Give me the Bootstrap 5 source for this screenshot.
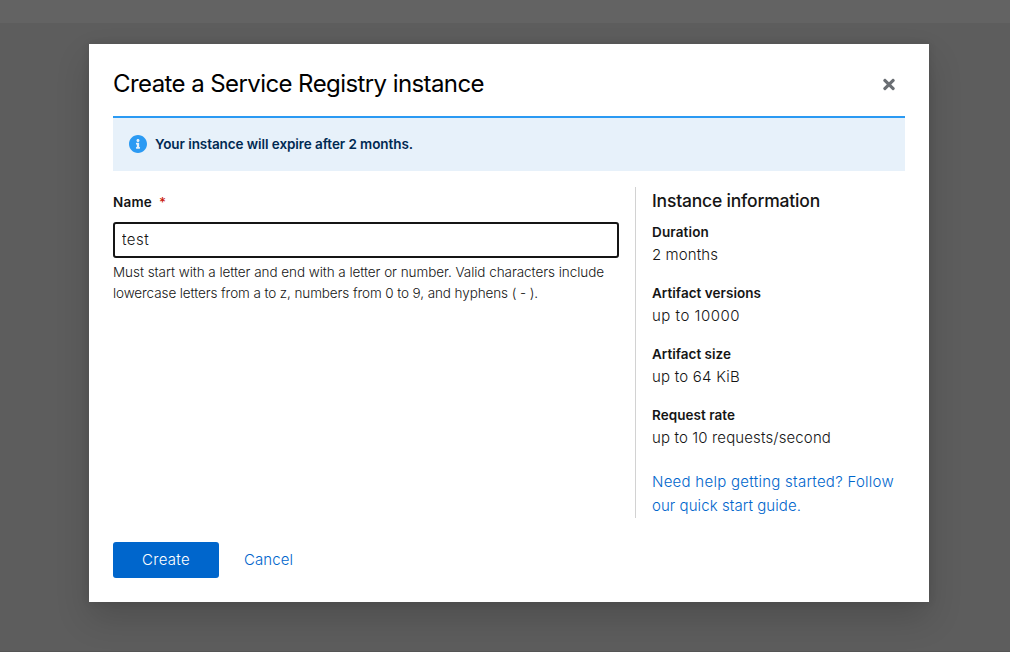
<!DOCTYPE html>
<html lang="en">
<head>
<meta charset="utf-8">
<meta name="viewport" content="width=device-width, initial-scale=1">
<title>Create a Service Registry instance</title>
<link href="https://cdn.jsdelivr.net/npm/bootstrap@5.3.0/dist/css/bootstrap.min.css" rel="stylesheet">
<style>
body { font-family: Inter, "Liberation Sans", sans-serif; font-size: 15px; font-weight: 350; line-height: 24px; color: #151515; background: #5d5d5d; height: 652px; overflow: hidden; border-bottom: 1px solid #555; }
.masthead { height: 23px; background: #636363; margin-bottom: 21px; }
.dialog-box { width: 840px; height: 558px; margin-left: 89px; padding: 24px; background: #fff; box-shadow: 0 16px 32px 0 rgba(3,3,3,.16), 0 0 8px 0 rgba(3,3,3,.1); }
.dialog-title { font-size: 24px; line-height: 31px; font-weight: 400; color: #000; }
.close-btn { width: 32px; height: 33px; color: #6a6e73; }
.info-alert { height: 55px; margin-top: 15px; border: 0; border-top: 2px solid #2b9af3; border-radius: 0; background: #e7f1fa; color: #002952; font-size: 13.5px; line-height: 21px; font-weight: 600; }
.info-alert .t { margin-top: -1px; }
.info-alert svg { margin-top: -1px; }
.main-cols { height: 331px; }
.form-col { width: 506px; padding-top: 5px; }
.label-text, dt { font-size: 13.5px; line-height: 21px; font-weight: 600; }
.t { display: block; width: max-content; white-space: nowrap; }
.req { color: #c9190b; margin-left: 7px; font-weight: 500; }
.name-input { height: 36px; margin-top: 9px; border: 2px solid #151515; border-radius: 3px; padding: 0 7px 1px; font-size: 15px; font-weight: 350; letter-spacing: .5px; color: #151515; }
.name-input:focus { border-color: #151515; box-shadow: none; }
.help-text { font-size: 13.5px; line-height: 21px; margin-top: 4px; }
.side-col { width: 270px; margin-left: 16px; border-left: 1px solid #d2d2d2; padding-left: 16px; }
.side-title { font-size: 17.5px; line-height: 27px; font-weight: 450; margin-bottom: 8px; }
dd { line-height: 24px; }
.guide { display: block; margin-top: 20px; }
.guide, .cancel-btn { color: #06c; text-decoration: none; }
.create-btn, .cancel-btn { height: 36px; font-size: 15px; font-weight: 350; line-height: 24px; }
.create-btn { width: 106px; background: #06c; border-radius: 3px; color: #fff; }
.create-btn .t { margin: -1px auto 0; }
.cancel-btn { margin-left: 25px; }
.cancel-btn .t { margin-top: -1px; }
</style>
</head>
<body>
<div class="masthead"></div>
<main class="dialog-box d-flex flex-column" role="dialog" aria-labelledby="title">
  <header class="d-flex justify-content-between align-items-start">
    <h1 class="dialog-title mb-0" id="title"><span class="t" data-w="371">Create a Service Registry instance</span></h1>
    <button class="btn p-0 border-0 close-btn d-flex align-items-center justify-content-center" aria-label="Close">
      <svg width="12" height="17" viewBox="0 0 352 512" fill="currentColor"><path d="M242.72 256l100.07-100.07c12.28-12.28 12.28-32.19 0-44.48l-22.24-22.24c-12.28-12.28-32.19-12.28-44.48 0L176 189.28 75.93 89.21c-12.28-12.28-32.19-12.28-44.48 0L9.21 111.45c-12.28 12.28-12.28 32.19 0 44.48L109.28 256 9.21 356.07c-12.28 12.28-12.28 32.19 0 44.48l22.24 22.24c12.28 12.28 32.2 12.28 44.48 0L176 322.72l100.07 100.07c12.28 12.28 32.2 12.28 44.48 0l22.24-22.24c12.28-12.28 12.28-32.19 0-44.48L242.72 256z"/></svg>
    </button>
  </header>
  <div class="alert info-alert d-flex align-items-center px-3 py-0 mb-3 gap-2 flex-shrink-0" role="status">
    <svg width="18" height="18" viewBox="8 8 496 496" fill="#2b9af3"><path d="M256 8C119.043 8 8 119.083 8 256c0 136.997 111.043 248 248 248s248-111.003 248-248C504 119.083 392.957 8 256 8zm0 110c23.196 0 42 18.804 42 42s-18.804 42-42 42-42-18.804-42-42 18.804-42 42-42zm56 254c0 6.627-5.373 12-12 12h-88c-6.627 0-12-5.373-12-12v-24c0-6.627 5.373-12 12-12h12v-64h-12c-6.627 0-12-5.373-12-12v-24c0-6.627 5.373-12 12-12h64c6.627 0 12 5.373 12 12v100h12c6.627 0 12 5.373 12 12v24z"/></svg>
    <span class="t" data-w="258">Your instance will expire after 2 months.</span>
  </div>
  <div class="d-flex main-cols">
    <form class="form-col">
      <label class="label-text d-flex" for="name"><span class="t" data-w="39">Name</span><span class="req">*</span></label>
      <input class="form-control name-input" id="name" value="test">
      <div class="help-text"><span class="t" data-w="491">Must start with a letter and end with a letter or number. Valid characters include</span><span class="t" data-w="425">lowercase letters from a to z, numbers from 0 to 9, and hyphens ( - ).</span></div>
    </form>
    <aside class="side-col">
      <h2 class="side-title"><span class="t" data-w="168">Instance information</span></h2>
      <dl class="mb-0 d-flex flex-column gap-3">
        <div><dt><span class="t" data-w="57">Duration</span></dt><dd class="mb-0"><span class="t" data-w="66">2 months</span></dd></div>
        <div><dt><span class="t" data-w="109">Artifact versions</span></dt><dd class="mb-0"><span class="t" data-w="88">up to 10000</span></dd></div>
        <div><dt><span class="t" data-w="79">Artifact size</span></dt><dd class="mb-0"><span class="t" data-w="88">up to 64 KiB</span></dd></div>
        <div><dt><span class="t" data-w="83">Request rate</span></dt><dd class="mb-0"><span class="t" data-w="179">up to 10 requests/second</span></dd></div>
      </dl>
      <a class="guide" href="#"><span class="t" data-w="242">Need help getting started? Follow</span><span class="t" data-w="149">our quick start guide.</span></a>
    </aside>
  </div>
  <footer class="d-flex mt-auto">
    <button class="btn create-btn border-0 p-0"><span class="t" data-w="48">Create</span></button>
    <button class="btn cancel-btn border-0 p-0"><span class="t" data-w="49">Cancel</span></button>
  </footer>
</main>
<script src="https://cdn.jsdelivr.net/npm/bootstrap@5.3.0/dist/js/bootstrap.bundle.min.js"></script>
<script>
document.querySelectorAll('.t[data-w]').forEach(function (el) {
  var gap = (Number(el.dataset.w) - el.getBoundingClientRect().width) / el.textContent.length;
  el.style.letterSpacing = gap.toFixed(3) + 'px';
});
</script>
</body>
</html>
